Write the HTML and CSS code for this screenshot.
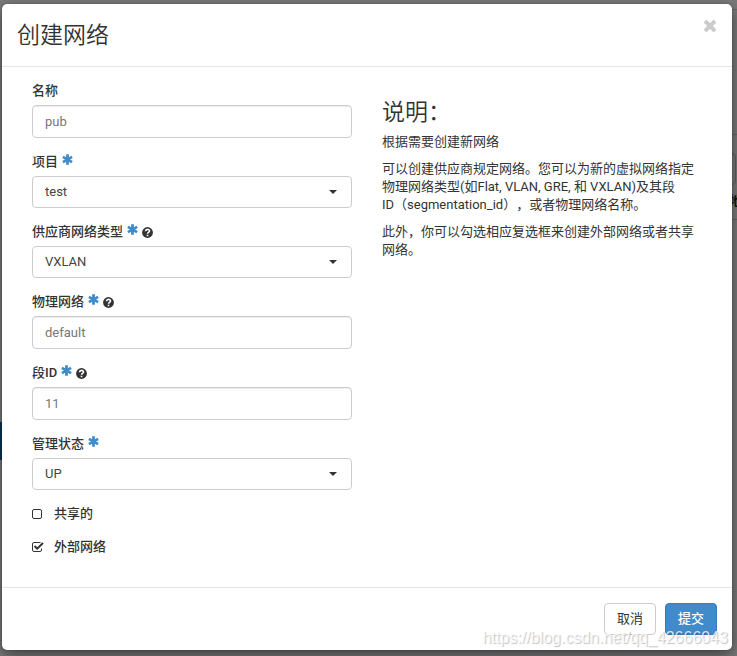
FILE: index.html
```html
<!DOCTYPE html>
<html lang="zh-CN">
<head>
<meta charset="utf-8">
<title>创建网络</title>
<meta name="viewport" content="width=device-width, initial-scale=1">
<link rel="stylesheet" href="styles.css">
</head>
<body>
<svg class="symbols" aria-hidden="true">
  <symbol id="asterisk" viewBox="0 0 11 11"><path d="M5.5 0.3V10.7M0.9 2.9L10.1 8.1M10.1 2.9L0.9 8.1" stroke="currentColor" stroke-width="2.8" fill="none"/></symbol>
  <symbol id="question" viewBox="0 0 11 11"><circle cx="5.5" cy="5.5" r="5.4" fill="currentColor"/><path d="M3.5 4.2C3.7 1.8 7.5 1.8 7.5 4.1C7.5 5.4 5.5 5.3 5.5 6.8" stroke="#fff" stroke-width="1.6" fill="none"/><path d="M4.7 7.7H6.3V9.2H4.7Z" fill="#fff"/></symbol>
  <symbol id="caret" viewBox="0 0 8 4"><path d="M0 0H8L4 4Z" fill="currentColor"/></symbol>
</svg>
<div class="backdrop" aria-hidden="true">
  <span class="nav-mark"></span>
  <span class="page-rule rule-top"></span>
  <span class="page-rule rule-filter"></span>
  <span class="page-button"></span>
  <span class="page-heading">地</span>
  <span class="page-rule rule-table"></span>
</div>
<form class="modal">
  <header class="modal-header">
    <h1>创建网络</h1>
    <button class="close" type="button" aria-label="关闭">
      <svg viewBox="0 0 14 14"><path d="M2 2L12 12M12 2L2 12" stroke="currentColor" stroke-width="4" fill="none"/></svg>
    </button>
  </header>
  <div class="modal-body">
    <div class="fields">
      <div class="field">
        <label for="name">名称</label>
        <input class="control" id="name" type="text" value="pub">
      </div>
      <div class="field">
        <label for="project">项目 <svg class="required"><use href="#asterisk"/></svg></label>
        <div class="select"><select class="control" id="project"><option>test</option></select><svg class="caret"><use href="#caret"/></svg></div>
      </div>
      <div class="field">
        <label for="type">供应商网络类型 <svg class="required"><use href="#asterisk"/></svg> <svg class="help"><use href="#question"/></svg></label>
        <div class="select"><select class="control" id="type"><option>VXLAN</option></select><svg class="caret"><use href="#caret"/></svg></div>
      </div>
      <div class="field">
        <label for="physical">物理网络 <svg class="required"><use href="#asterisk"/></svg> <svg class="help"><use href="#question"/></svg></label>
        <input class="control" id="physical" type="text" value="default">
      </div>
      <div class="field">
        <label for="segment">段ID <svg class="required"><use href="#asterisk"/></svg> <svg class="help"><use href="#question"/></svg></label>
        <input class="control" id="segment" type="text" value="11">
      </div>
      <div class="field">
        <label for="state">管理状态 <svg class="required"><use href="#asterisk"/></svg></label>
        <div class="select"><select class="control" id="state"><option>UP</option></select><svg class="caret"><use href="#caret"/></svg></div>
      </div>
      <div class="check">
        <input id="shared" type="checkbox">
        <svg class="box" viewBox="0 0 12 12"><rect x="0.5" y="1.5" width="9" height="9" rx="1.5" fill="none" stroke="currentColor"/></svg>
        <label for="shared">共享的</label>
      </div>
      <div class="check">
        <input id="external" type="checkbox" checked>
        <svg class="box" viewBox="0 0 12 12"><path d="M8.5 1.5H2Q0.5 1.5 0.5 3V9Q0.5 10.5 2 10.5H8Q9.5 10.5 9.5 9V7.5" fill="none" stroke="currentColor"/><path d="M2.5 5L5.2 7.7L11 2" fill="none" stroke="currentColor" stroke-width="2"/></svg>
        <label for="external">外部网络</label>
      </div>
    </div>
    <section class="description">
      <h2>说明：</h2>
      <p>根据需要创建新网络</p>
      <p>可以创建供应商规定网络。您可以为新的虚拟网络指定物理网络类型(如Flat, VLAN, GRE, 和 VXLAN)及其段<span class="term">ID（segmentation_id）</span>，或者物理网络名称。</p>
      <p>此外，你可以勾选相应复选框来创建外部网络或者共享网络。</p>
    </section>
  </div>
  <footer class="modal-footer">
    <button class="button" type="button">取消</button>
    <button class="button primary" type="submit">提交</button>
  </footer>
</form>
<div class="watermark">https://blog.csdn.net/qq_42666043</div>
</body>
</html>
```
FILE: styles.css
```css
* { box-sizing: border-box; }

body {
  margin: 0;
  padding: 4px 5px 6px 2px;
  position: relative;
  min-height: 100vh;
  background: #7a7a7a;
  color: #333;
  font-family: Roboto, "Noto Sans CJK SC", sans-serif;
  font-size: 13px;
  line-height: 18px;
  text-spacing-trim: space-all;
}

.symbols { position: absolute; width: 0; height: 0; }

.backdrop { position: absolute; inset: 0; overflow: hidden; }
.backdrop span { position: absolute; }
.nav-mark { left: 0; top: 422px; width: 2px; height: 38px; background: #0b355c; }
.page-rule { right: 0; width: 6px; height: 1px; background: #666; }
.rule-top { top: 9px; }
.rule-filter { top: 134px; }
.rule-table { top: 219px; }
.page-button { right: 1px; top: 153px; width: 12px; height: 32px; border: 1px solid #606060; border-radius: 4px; }
.page-heading { right: -5px; top: 192px; color: #111; font-weight: 700; }

.modal {
  position: relative;
  background: #fff;
  border-radius: 5px;
  box-shadow: 0 0 1px #222, 0 5px 15px rgba(0, 0, 0, 0.5);
}

.modal-header {
  display: flex;
  justify-content: space-between;
  align-items: flex-start;
  padding: 15px 15px 14px;
  border-bottom: 1px solid #e5e5e5;
}

h1, h2 { margin: 0; font-size: 23px; font-weight: 350; }
h1 { line-height: 33px; }
h2 { line-height: 26px; margin-bottom: 7px; }

.close {
  display: block;
  width: 14px;
  height: 14px;
  padding: 0;
  border: 0;
  background: none;
  color: #ccc;
}
.close svg { display: block; width: 14px; height: 14px; }

.modal-body {
  display: grid;
  grid-template-columns: 1fr 1fr;
  gap: 30px;
  padding: 15px 30px 16px;
}

.field { margin-bottom: 15px; }
.field label { display: flex; align-items: center; gap: 4px; margin-bottom: 5px; }
label { font-weight: 500; }

.required { width: 11px; height: 11px; margin-bottom: 5px; color: #428bca; }
.help { width: 11px; height: 11px; }

.control {
  display: block;
  width: 100%;
  height: 33px;
  margin: 0;
  padding: 0 12px;
  border: 1px solid #ccc;
  border-radius: 4px;
  background: #fff;
  box-shadow: inset 0 1px 1px rgba(0, 0, 0, 0.075);
  color: #777;
  font: inherit;
}
.select { position: relative; }
select.control { height: 32px; appearance: none; box-shadow: none; color: #444; }
.caret { position: absolute; right: 15px; top: 14px; width: 8px; height: 4px; pointer-events: none; }

.check { position: relative; display: flex; align-items: center; margin-bottom: 15px; }
.check input { position: absolute; width: 12px; height: 12px; margin: 0; opacity: 0; }
.box { width: 12px; height: 12px; margin-right: 10px; }

.description { padding-top: 18px; }
p { margin: 0 0 9px; }
.term { white-space: nowrap; }

.modal-footer {
  display: flex;
  justify-content: flex-end;
  gap: 9px;
  padding: 15px;
  border-top: 1px solid #e5e5e5;
}
.button {
  height: 32px;
  padding: 0 12px;
  border: 1px solid #ccc;
  border-radius: 4px;
  background: #fff;
  color: #333;
  font: inherit;
}
.primary { border-color: #357ebd; background: #428bca; color: #fff; font-weight: 500; }

.watermark {
  position: absolute;
  right: 9px;
  bottom: 9px;
  color: rgba(255, 255, 255, 0.8);
  font-family: "Liberation Sans", sans-serif;
  font-size: 16px;
  text-shadow: 1px 1px 1px rgba(0, 0, 0, 0.25);
  pointer-events: none;
}
```
